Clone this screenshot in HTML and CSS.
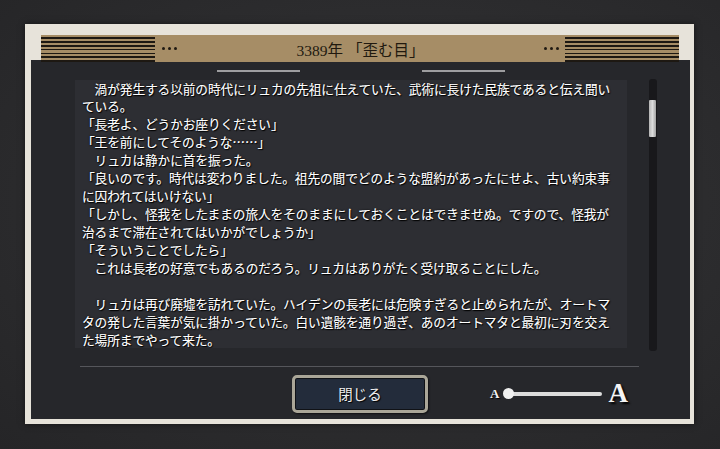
FILE: index.html
```html
<!DOCTYPE html>
<html lang="ja">

<head>
    <meta charset="UTF-8">
    <meta name="viewport" content="width=device-width, initial-scale=1.0">
    <title>3389年 「歪む目」</title>
    <link rel="stylesheet" href="styles.css">
</head>

<body>
    <div class="frame">
        <div class="banner">
            <div class="stripes"></div>
            <div class="dots dots-left"><i></i><i></i><i></i></div>
            <h1 class="title">3389年 「歪む目」</h1>
            <div class="dots dots-right"><i></i><i></i><i></i></div>
            <div class="stripes"></div>
        </div>

        <div class="panel">
            <div class="deco"><span></span><span></span></div>

            <div class="reader">
                <div class="story">
                    　渦が発生する以前の時代にリュカの先祖に仕えていた、武術に長けた民族であると伝え聞い<br>
                    ている。<br>
                    「長老よ、どうかお座りください」<br>
                    「王を前にしてそのような……」<br>
                    　リュカは静かに首を振った。<br>
                    「良いのです。時代は変わりました。祖先の間でどのような盟約があったにせよ、古い約束事<br>
                    に囚われてはいけない」<br>
                    「しかし、怪我をしたままの旅人をそのままにしておくことはできませぬ。ですので、怪我が<br>
                    治るまで滞在されてはいかがでしょうか」<br>
                    「そういうことでしたら」<br>
                    　これは長老の好意でもあるのだろう。リュカはありがたく受け取ることにした。<br>
                    <br>
                    　リュカは再び廃墟を訪れていた。ハイデンの長老には危険すぎると止められたが、オートマ<br>
                    タの発した言葉が気に掛かっていた。白い遺骸を通り過ぎ、あのオートマタと最初に刃を交え<br>
                    た場所までやって来た。
                </div>
                <div class="scrollbar">
                    <div class="thumb"></div>
                </div>
            </div>

            <div class="divider"></div>

            <div class="footer">
                <button class="close-btn">閉じる</button>
                <div class="font-size">
                    <span class="a-small">A</span>
                    <div class="slider"><span class="knob"></span></div>
                    <span class="a-large">A</span>
                </div>
            </div>
        </div>
    </div>
</body>

</html>
```

FILE: styles.css
```css
body {
    margin: 0;
    width: 720px;
    height: 449px;
    overflow: hidden;
    background: radial-gradient(ellipse at 55% 45%, #39393b 0%, #2c2c2e 55%, #252527 100%);
    padding: 24px 0 0 25px;
    box-sizing: border-box;
    font-family: "Noto Sans CJK JP", sans-serif;
}

.frame {
    width: 669px;
    height: 400px;
    box-sizing: border-box;
    background-color: #e7e3da;
    padding: 11px 4px 5px 6px;
    box-shadow: 0 0 6px rgba(0, 0, 0, 0.5);
}

/* header bar */
.banner {
    position: relative;
    z-index: 1;
    height: 27px;
    margin: 0 11px -2px 10px;
    background-color: #a68d66;
    display: flex;
    align-items: center;
}

.stripes {
    width: 114px;
    height: 100%;
    background: repeating-linear-gradient(to bottom,
            #a68d66 0, #a68d66 2.2px,
            #1d1812 2.2px, #1d1812 3.85px);
}

.dots {
    display: flex;
    gap: 3px;
}

.dots i {
    width: 3px;
    height: 3px;
    border-radius: 50%;
    background-color: #1f1912;
}

.dots-left {
    margin-left: 7px;
}

.dots-right {
    margin-right: 6px;
}

.title {
    flex: 1;
    margin: 0;
    text-align: center;
    font-family: "Liberation Serif", "Noto Sans CJK JP", serif;
    font-size: 15.5px;
    font-weight: normal;
    color: #21190f;
}

/* dark panel */
.panel {
    height: 359px;
    box-sizing: border-box;
    background-color: #26272b;
    padding-top: 10px;
}

.deco {
    display: flex;
    justify-content: center;
    gap: 122px;
}

.deco span {
    width: 83px;
    height: 1.5px;
    background-color: #9d9d9f;
}

.reader {
    display: flex;
    margin-top: 7px;
    padding-left: 44px;
}

.story {
    width: 552px;
    height: 268px;
    margin-top: 1px;
    box-sizing: border-box;
    padding-left: 7px;
    background-color: #2d2e33;
    overflow: hidden;
    white-space: nowrap;
    font-size: 12.6px;
    line-height: 17.93px;
    color: #ffffff;
    text-shadow: 1px 1px 1px #000, 0 0 2px #000, 0.3px 0 0 #fff;
}

.scrollbar {
    width: 8px;
    height: 272px;
    margin-left: 22px;
    background-color: #18181b;
    border-radius: 3px;
    padding-top: 21px;
    box-sizing: border-box;
}

.thumb {
    width: 7px;
    height: 37px;
    background: linear-gradient(to right, #b5b5b5, #dcdcdc 50%, #a2a2a2);
    border-radius: 1px;
}

.divider {
    width: 559px;
    height: 1px;
    margin: 15px 0 0 49px;
    background-color: #55565b;
}

/* bottom controls */
.footer {
    display: flex;
    align-items: center;
    margin-top: 8px;
    padding-left: 261px;
}

.close-btn {
    width: 136px;
    height: 38px;
    border: 3px solid #aaa698;
    border-radius: 5px;
    background-color: #232c3b;
    box-shadow: inset 0 0 0 1px #101216, 1px 1px 2px rgba(0, 0, 0, 0.6);
    color: #eeeeee;
    font-family: "Noto Sans CJK JP", sans-serif;
    font-size: 14.5px;
    text-shadow: 1px 1px 1px #000;
    padding: 0;
}

.font-size {
    display: flex;
    align-items: center;
    margin-left: 62px;
}

.a-small,
.a-large {
    font-family: "Liberation Serif", serif;
    font-weight: bold;
    color: #f4f4f4;
}

.a-small {
    font-size: 13px;
    text-shadow: 1px 1px 1px #000;
}

.a-large {
    font-size: 27px;
    margin-left: 6px;
    text-shadow: 2px 2px 2px #000;
}

.slider {
    position: relative;
    width: 99px;
    height: 11px;
    margin-left: 4px;
}

.slider::before {
    content: "";
    position: absolute;
    left: 5px;
    right: 0;
    top: 3.5px;
    height: 4px;
    border-radius: 2px;
    background-color: #dcdcdc;
}

.knob {
    position: absolute;
    left: 0;
    top: 0;
    width: 11px;
    height: 11px;
    border-radius: 50%;
    background-color: #f0f0f0;
}
```
